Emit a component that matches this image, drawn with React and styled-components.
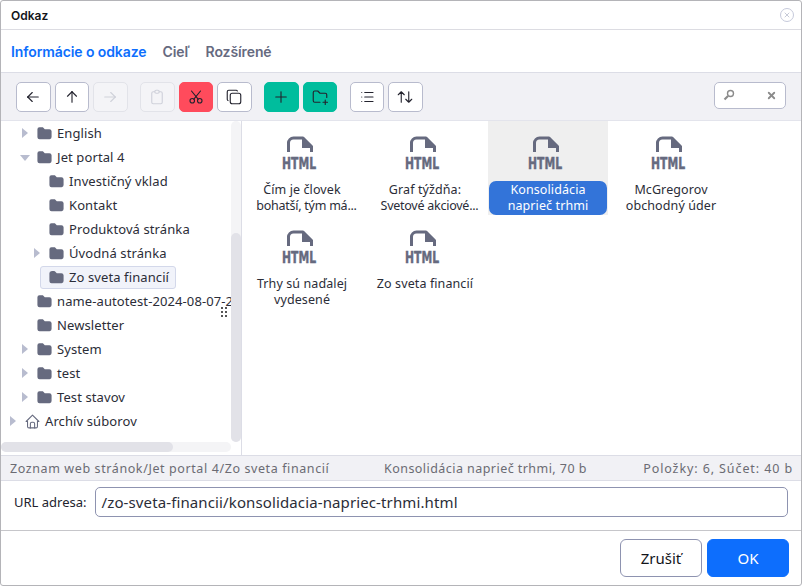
import React from "react";
import styled, { createGlobalStyle } from "styled-components";
import {
  TbArrowLeft,
  TbArrowUp,
  TbArrowRight,
  TbClipboard,
  TbCut,
  TbCopy,
  TbPlus,
  TbFolderPlus,
  TbList,
  TbArrowsSort,
  TbFolderFilled,
  TbHome,
  TbX,
} from "react-icons/tb";

const GlobalStyle = createGlobalStyle`
  html, body {
    margin: 0;
    padding: 0;
    background: #fff;
  }
`;

const Window = styled.div`
  box-sizing: border-box;
  width: 802px;
  height: 586px;
  border: 1px solid #b4b4b8;
  border-radius: 3px;
  display: flex;
  flex-direction: column;
  overflow: hidden;
  font-family: "Noto Sans", sans-serif;
  color: #23232e;
  background: #fff;
`;

const TitleBar = styled.div`
  height: 28px;
  flex: none;
  display: flex;
  align-items: center;
  justify-content: space-between;
  padding: 0 7px 0 10px;
  border-bottom: 1px solid #dcdce2;
  font: 600 12px Inter, sans-serif;
  color: #13151a;
`;

const CloseButton = styled.span`
  width: 12px;
  height: 12px;
  border: 1px solid #c6cadb;
  border-radius: 50%;
  display: flex;
  align-items: center;
  justify-content: center;
  color: #aab0c4;
  font-size: 8px;
`;

const Tabs = styled.div`
  height: 42px;
  flex: none;
  display: flex;
  align-items: center;
  gap: 16px;
  padding-left: 10px;
  border-bottom: 1px solid #dcdde6;
`;

const Tab = styled.span`
  font: 600 14px Inter, sans-serif;
  letter-spacing: -0.1px;
  color: ${(p) => (p.$active ? "#0d6efd" : "#666a7f")};
`;

const Toolbar = styled.div`
  height: 47px;
  flex: none;
  display: flex;
  align-items: center;
  padding: 0 15px;
  background: #f1f1f5;
  border-bottom: 1px solid #e3e4ec;
`;

const Group = styled.div`
  display: flex;
  gap: 4px;
  margin-right: 12.5px;
`;

const ToolButton = styled.button`
  box-sizing: border-box;
  width: 34.5px;
  height: 30px;
  padding: 0;
  border-radius: 5px;
  display: flex;
  align-items: center;
  justify-content: center;
  font-size: 18px;
  border: 1px solid
    ${(p) =>
      p.$kind === "danger"
        ? "#ff4b5c"
        : p.$kind === "success"
        ? "#00bd9d"
        : p.$disabled
        ? "#e2e3e9"
        : "#b8bbcd"};
  background: ${(p) =>
    p.$kind === "danger"
      ? "#ff4b5c"
      : p.$kind === "success"
      ? "#00bd9d"
      : p.$disabled
      ? "#f4f4f7"
      : "#fff"};
  color: ${(p) => (p.$disabled ? "#cfd1da" : "#23232e")};

  svg {
    stroke-width: 1.5;
  }
`;

const SearchBox = styled.div`
  box-sizing: border-box;
  width: 72px;
  height: 27px;
  margin-left: auto;
  margin-top: -3px;
  display: flex;
  align-items: center;
  justify-content: space-between;
  padding: 0 8px;
  background: #fff;
  border: 1px solid #b8bbcd;
  border-radius: 5px;
  color: #8b8b8b;
`;

const Main = styled.div`
  height: 334px;
  flex: none;
  display: flex;
`;

const TreePane = styled.div`
  width: 240px;
  flex: none;
  display: flex;
  flex-direction: column;
  border-right: 1px solid #dcdde6;
  position: relative;
`;

const TreeBody = styled.div`
  flex: 1;
  min-height: 0;
  display: flex;
`;

const TreeList = styled.div`
  flex: 1;
  min-width: 0;
  overflow: hidden;
`;

const Row = styled.div`
  height: 24px;
  display: flex;
  align-items: center;
  white-space: nowrap;
  padding-left: ${(p) => p.$depth * 12 + 6}px;
  font-size: 13px;
  letter-spacing: 0.1px;
  color: #2b2d38;
`;

const Twisty = styled.span`
  width: 12px;
  flex: none;
  display: flex;
  justify-content: center;
  margin-right: 4px;

  &::before {
    content: "";
    display: ${(p) => (p.$state ? "block" : "none")};
    border-style: solid;
    border-color: transparent;
    ${(p) =>
      p.$state === "open"
        ? "border-width: 6px 5px 0 5px; border-top-color: #b8bccf; margin-top: 1px;"
        : "border-width: 5px 0 5px 6px; border-left-color: #b8bccf;"}
  }
`;

const RowLabel = styled.span`
  display: flex;
  align-items: center;
  gap: 4px;
  height: 23px;
  padding: 0 6px 0 ${(p) => (p.$selected ? "7px" : "0")};
  margin-left: ${(p) => (p.$selected ? "-7px" : "0")};
  box-sizing: border-box;
  border: 1px solid ${(p) => (p.$selected ? "#d3d8ea" : "transparent")};
  border-radius: 3px;
  background: ${(p) => (p.$selected ? "#f1f3fa" : "transparent")};

  svg {
    flex: none;
    color: #666a7f;
  }
`;

const VScroll = styled.div`
  width: 10px;
  flex: none;
  background: #f4f4f6;
  border-radius: 5px;
`;

const VThumb = styled.div`
  margin-top: 112px;
  height: 209px;
  background: #e2e2e8;
  border-radius: 5px;
`;

const HScroll = styled.div`
  height: 10px;
  width: 230px;
  margin-bottom: 3px;
  flex: none;
  background: #f4f4f6;
  border-radius: 5px;
`;

const HThumb = styled.div`
  width: 172px;
  height: 100%;
  background: #e2e2e8;
  border-radius: 5px;
`;

const DragGrip = styled.span`
  position: absolute;
  left: 220px;
  top: 186px;
  width: 6px;
  height: 12px;
  display: grid;
  grid-template-columns: 2px 2px;
  grid-auto-rows: 2px;
  gap: 2px;

  i {
    background: #555;
  }
`;

const FileGrid = styled.div`
  flex: 1;
  display: grid;
  grid-template-columns: repeat(4, 120px);
  grid-auto-rows: 94px;
  column-gap: 3px;
  align-content: start;
`;

const FileItem = styled.div`
  display: flex;
  flex-direction: column;
  align-items: center;
  padding-top: 15px;
  box-sizing: border-box;
  background: ${(p) => (p.$selected ? "#efefef" : "transparent")};
`;

const FileIcon = styled.svg`
  width: 36px;
  height: 36px;
  margin: 0 6px 9px 0;
  flex: none;
  overflow: visible;
  color: #666a7f;
`;

const FileName = styled.div`
  box-sizing: border-box;
  width: 118px;
  height: 34px;
  padding: 1px 2px 0;
  border-radius: 7px;
  text-align: center;
  font-size: 12.5px;
  line-height: 16px;
  letter-spacing: 0.1px;
  white-space: nowrap;
  background: ${(p) => (p.$selected ? "#3374d9" : "transparent")};
  color: ${(p) => (p.$selected ? "#fff" : "#2b2d38")};
`;

const NameLine = styled.div`
  padding-left: ${(p) => (p.$clamped ? "9px" : "0")};
  letter-spacing: ${(p) => (p.$clamped ? "-0.25px" : "inherit")};
`;

const StatusBar = styled.div`
  height: 26px;
  flex: none;
  display: grid;
  grid-template-columns: 374px 1fr auto;
  align-items: center;
  padding: 0 8px 0 9px;
  background: #f1f1f5;
  border-top: 1px solid #dcdde6;
  border-bottom: 1px solid #dcdde6;
  box-sizing: border-box;
  font-size: 12.5px;
  color: #6b6b73;
`;

const StatusText = styled.span`
  letter-spacing: ${(p) => p.$spacing}px;
`;

const UrlRow = styled.div`
  height: 50px;
  flex: none;
  display: flex;
  align-items: center;
  gap: 8px;
  padding: 0 13px 8px 13px;
  box-sizing: border-box;
  border-bottom: 1px solid #c6c6ca;
  font-size: 13px;
`;

const UrlInput = styled.div`
  flex: 1;
  box-sizing: border-box;
  height: 30px;
  padding: 0 6px;
  display: flex;
  align-items: center;
  border: 1px solid #8e93b0;
  border-radius: 5px;
  font-size: 15px;
  letter-spacing: 0.12px;
  color: #2b2d38;
`;

const Footer = styled.div`
  flex: 1;
  display: flex;
  justify-content: flex-end;
  align-items: flex-start;
  gap: 5px;
  padding: 8px 12px 0 0;
`;

const FooterButton = styled.button`
  box-sizing: border-box;
  width: 82px;
  height: 38px;
  border-radius: 6px;
  font: 15px "Noto Sans", sans-serif;
  border: 1px solid ${(p) => (p.$primary ? "#0d6efd" : "#8e93b0")};
  background: ${(p) => (p.$primary ? "#0d6efd" : "#fff")};
  color: ${(p) => (p.$primary ? "#fff" : "#13151a")};
`;

const tree = [
  { name: "English", depth: 1, state: "closed" },
  { name: "Jet portal 4", depth: 1, state: "open" },
  { name: "Investičný vklad", depth: 2 },
  { name: "Kontakt", depth: 2 },
  { name: "Produktová stránka", depth: 2 },
  { name: "Úvodná stránka", depth: 2, state: "closed" },
  { name: "Zo sveta financií", depth: 2, selected: true },
  { name: "name-autotest-2024-08-07-2", depth: 1 },
  { name: "Newsletter", depth: 1 },
  { name: "System", depth: 1, state: "closed" },
  { name: "test", depth: 1, state: "closed" },
  { name: "Test stavov", depth: 1, state: "closed" },
];

const files = [
  { lines: ["Čím je človek", "bohatší, tým má..."] },
  { lines: ["Graf týždňa:", "Svetové akciové..."] },
  { lines: ["Konsolidácia", "naprieč trhmi"], selected: true },
  { lines: ["McGregorov", "obchodný úder"] },
  { lines: ["Trhy sú naďalej", "vydesené"] },
  { lines: ["Zo sveta financií"] },
];

const HtmlIcon = () => (
  <FileIcon viewBox="0 0 36 36" fill="none">
    <path
      d="M7.5 16V7a5 5 0 0 1 5-5h9.5l8.5 8.5V16"
      stroke="currentColor"
      strokeWidth="3"
      strokeLinejoin="round"
    />
    <path d="M21 2v10h10z" fill="currentColor" />
    <text
      x="18"
      y="33"
      textAnchor="middle"
      textLength="34"
      lengthAdjust="spacingAndGlyphs"
      fontFamily="'DejaVu Sans'"
      fontWeight="700"
      fontSize="16"
      fill="currentColor"
      stroke="currentColor"
      strokeWidth="0.5"
    >
      HTML
    </text>
  </FileIcon>
);

const SearchIcon = () => (
  <svg width="12" height="12" viewBox="0 0 12 12" fill="none">
    <circle cx="7.5" cy="4.5" r="3" stroke="currentColor" strokeWidth="1.4" />
    <path d="M5 7L1.5 10.5" stroke="currentColor" strokeWidth="2.2" />
  </svg>
);

const App = () => (
  <Window>
    <GlobalStyle />
    <TitleBar>
      Odkaz
      <CloseButton>
        <TbX />
      </CloseButton>
    </TitleBar>
    <Tabs>
      <Tab $active>Informácie o odkaze</Tab>
      <Tab>Cieľ</Tab>
      <Tab>Rozšírené</Tab>
    </Tabs>
    <Toolbar>
      <Group>
        <ToolButton><TbArrowLeft /></ToolButton>
        <ToolButton><TbArrowUp /></ToolButton>
        <ToolButton $disabled><TbArrowRight /></ToolButton>
      </Group>
      <Group>
        <ToolButton $disabled><TbClipboard /></ToolButton>
        <ToolButton $kind="danger"><TbCut /></ToolButton>
        <ToolButton><TbCopy /></ToolButton>
      </Group>
      <Group>
        <ToolButton $kind="success"><TbPlus /></ToolButton>
        <ToolButton $kind="success"><TbFolderPlus /></ToolButton>
      </Group>
      <Group>
        <ToolButton><TbList /></ToolButton>
        <ToolButton><TbArrowsSort /></ToolButton>
      </Group>
      <SearchBox>
        <SearchIcon />
        <TbX size={11} strokeWidth={4} />
      </SearchBox>
    </Toolbar>
    <Main>
      <TreePane>
        <TreeBody>
          <TreeList>
            {tree.map((item) => (
              <Row key={item.name} $depth={item.depth}>
                <Twisty $state={item.state} />
                <RowLabel $selected={item.selected}>
                  <TbFolderFilled size={17} />
                  {item.name}
                </RowLabel>
              </Row>
            ))}
            <Row $depth={0}>
              <Twisty $state="closed" />
              <RowLabel>
                <TbHome size={17} strokeWidth={1.5} />
                Archív súborov
              </RowLabel>
            </Row>
          </TreeList>
          <VScroll>
            <VThumb />
          </VScroll>
        </TreeBody>
        <HScroll>
          <HThumb />
        </HScroll>
        <DragGrip>
          {[0, 1, 2, 3, 4, 5].map((dot) => (
            <i key={dot} />
          ))}
        </DragGrip>
      </TreePane>
      <FileGrid>
        {files.map(({ lines, selected }) => (
          <FileItem key={lines[0]} $selected={selected}>
            <HtmlIcon />
            <FileName $selected={selected}>
              {lines.map((line) => (
                <NameLine key={line} $clamped={line.endsWith("...")}>
                  {line}
                </NameLine>
              ))}
            </FileName>
          </FileItem>
        ))}
      </FileGrid>
    </Main>
    <StatusBar>
      <StatusText $spacing={0.6}>Zoznam web stránok/Jet portal 4/Zo sveta financií</StatusText>
      <StatusText $spacing={0.45}>Konsolidácia naprieč trhmi, 70 b</StatusText>
      <StatusText $spacing={0.9}>Položky: 6, Súčet: 40 b</StatusText>
    </StatusBar>
    <UrlRow>
      URL adresa:
      <UrlInput>/zo-sveta-financii/konsolidacia-napriec-trhmi.html</UrlInput>
    </UrlRow>
    <Footer>
      <FooterButton>Zrušiť</FooterButton>
      <FooterButton $primary>OK</FooterButton>
    </Footer>
  </Window>
);

export default App;
